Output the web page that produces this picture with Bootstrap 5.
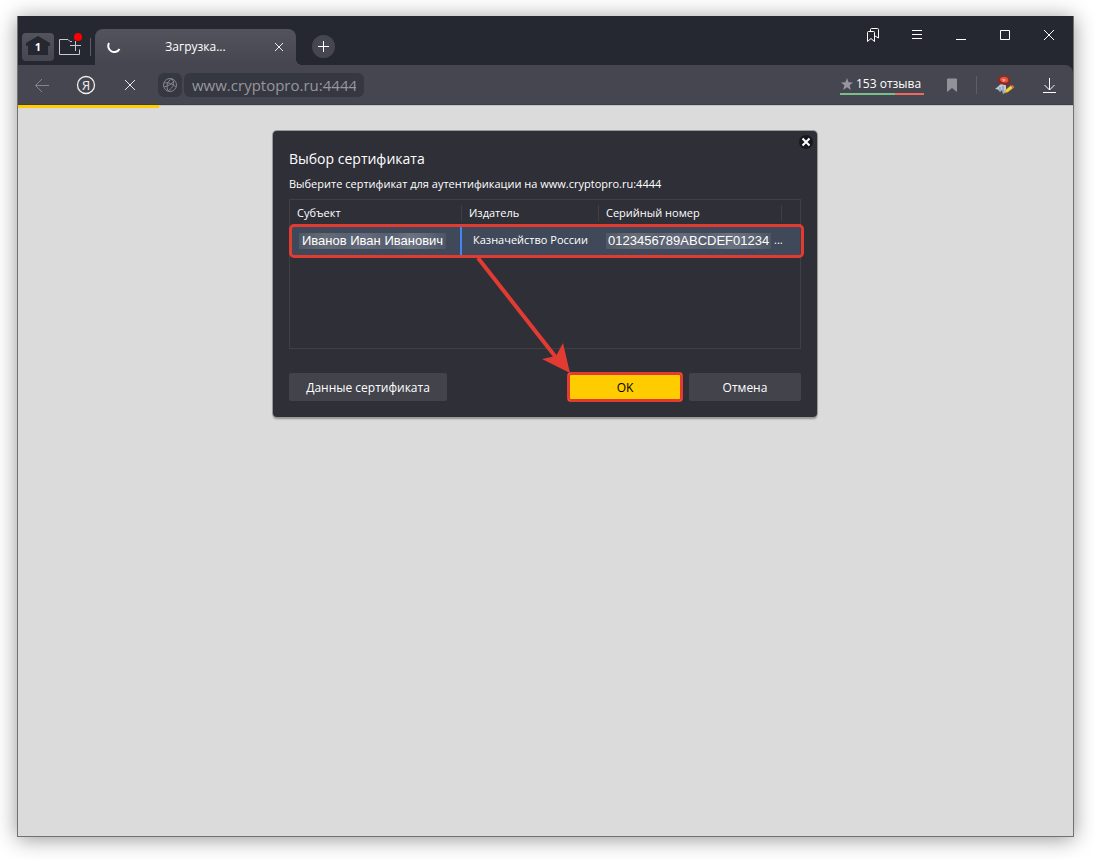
<!DOCTYPE html>
<html lang="ru">
<head>
<meta charset="utf-8">
<meta name="viewport" content="width=device-width, initial-scale=1">
<title>Выбор сертификата</title>
<link href="https://cdn.jsdelivr.net/npm/bootstrap@5.3.0/dist/css/bootstrap.min.css" rel="stylesheet">
<style>
body{background:#fff;font-family:"Open Sans","Noto Sans",sans-serif;font-size:12px;line-height:20px;color:#fff;padding:16px 21px 22px 17px}
button{border:0;background:none;padding:0;color:inherit}
svg{display:block;flex:none;overflow:visible}
.browser{min-height:calc(100vh - 38px);background:#dbdbdb;border:1px solid #717171;border-top:0;box-shadow:0 2px 20px rgba(0,0,0,.42)}
.tabstrip{height:49px;background:#252830;padding:0 2px 0 4px}
.home-btn{width:32px;height:28px;margin-top:17px;border-radius:4px;background:linear-gradient(#53535d,#464650)}
.collections{width:24px;height:24px;margin:19px 0 0 4px}
.split{width:1px;height:18px;background:#5c5e66}
.tabstrip .split{margin:22px 4px 0 8px}
.page-tab{width:201px;height:36px;margin-top:13px;padding:0 8px 0 10px;border-radius:8px 8px 0 0;background:linear-gradient(#53535d,#464650)}
.page-tab::after{content:"";position:absolute;left:100%;bottom:0;width:6px;height:6px;background:radial-gradient(circle at 100% 0,transparent 6px,#464650 6px)}
.add-tab{width:23px;height:23px;margin:19px 0 0 16px;border-radius:50%;background:#464650}
.bar-btn{width:44px;height:38px;display:flex;align-items:center;justify-content:center}
.toolbar-band{background:#252830}
.toolbar{height:40px;background:#464650;border-bottom:1px solid #3d3d46;border-radius:0 8px 0 0;padding:0 2px}
.site-btn{width:24px;height:24px;border-radius:6px;background:#363841;margin:0 2px 0 6px}
.address{width:180px;height:24px;border:0;border-radius:6px;background:#363841;color:#96979d;font-size:15px;padding:0 8px;outline:0}
.reviews{color:#fff;font-size:12px;padding:0 1px;height:20px;width:84px;border-bottom:2px solid;border-image:linear-gradient(90deg,#77c08a 65%,#ef6a5a 65%) 1}
.reviews svg{margin-right:3px}
.toolbar .split{margin:0 6px 0 4px}
.progress-line{height:3px;border-top:1px solid #c4c4c4}
.progress-line div{height:3px;margin-top:-1px;background:#fc0}
main{padding:23px 1px 0 0}
.dialog-box{width:544px;max-width:100%;margin:0 auto;padding:16px;background:#2f2f38;border-radius:4px;box-shadow:0 0 0 1px #999,0 2px 2px rgba(0,0,0,.35)}
.dialog-box h1{font-size:14px;line-height:24px;font-weight:400;margin:0}
.dialog-box p{font-size:11px;margin:3px 0 5px}
.dlg-close{position:absolute;right:4px;top:4px;width:14px;height:14px;border-radius:50%;background:#18181c}
.grid-box{height:150px;border:1px solid #3f3f46}
.certs{width:100%;table-layout:fixed;border-collapse:separate;border-spacing:0;font-size:11px;white-space:nowrap}
.certs th{font-weight:400;height:25px;padding:0 7px;background:linear-gradient(#3f3f46,#3f3f46) 100% 50%/1px 16px no-repeat}
.certs th:last-child{background:none;padding:0}
.certs td{height:31px;background:#3f4959;padding:0 0 2px 11px;font-size:11px}
.certs td:first-child{border-right:2px solid #4285f4;padding-left:9px}
.certs td:nth-child(3){padding-left:7px}
.masked{background:linear-gradient(90deg,#505865,#666b76 18%,#596170 32%,#666b7b 45%,#565e6e 60%,#6c7280 75%,#5e6675 88%,#4c5564);font:13px/16px "Liberation Sans",Arial,sans-serif;display:inline-block;padding:0 3px;vertical-align:middle}
.certs td:nth-child(3) .masked{padding:0 2px}
.row-mark{position:absolute;left:-1px;right:-4px;top:24px;height:34px;border:3px solid #e23b32;border-radius:5px;pointer-events:none}
.pointer{position:absolute;left:184px;top:56px;pointer-events:none}
.actions{margin-top:24px}
.dlg-btn{height:28px;width:112px;border-radius:2px;background:#42434b;font-size:12px;padding-top:1px}
.dlg-btn.wide{width:158px}
.dlg-btn.accept{background:#fc0;color:#000;margin-right:7px;box-shadow:0 0 0 1px #e23b32,inset 0 0 0 2px #e23b32;border-radius:3px;width:114px}
</style>
</head>
<body>
<div class="browser">
  <header>
    <div class="tabstrip d-flex align-items-start">
      <button class="home-btn" aria-label="Главная"><svg width="32" height="28" viewBox="0 0 32 28"><path d="M4 10 16 3l12 7v3h-2v9H6v-9H4z" fill="#252830"/><text x="16" y="18" text-anchor="middle" font-size="11" font-weight="700" fill="#fff">1</text></svg></button>
      <button class="collections" aria-label="Коллекции"><svg width="24" height="24" viewBox="0 0 24 24" fill="none" stroke="#c9cacd"><path d="M14 6.500h-2l-2-2H1.500v15h20v-5M17.500 6v10M12 10.500h11"/><circle cx="20" cy="2" r="4" fill="#f00" stroke="none"/></svg></button>
      <div class="split"></div>
      <div class="page-tab position-relative d-flex align-items-center">
        <svg width="16" height="16" viewBox="0 0 16 16" fill="none" stroke="#fff" stroke-width="2"><path d="M4 4A6 6 0 1 0 14.500 10"/></svg>
        <span class="flex-grow-1 text-center">Загрузка...</span>
        <button aria-label="Закрыть вкладку"><svg width="18" height="18" viewBox="0 0 18 18" stroke="#eee"><path d="m5 5 8 8m0-8-8 8"/></svg></button>
      </div>
      <button class="add-tab" aria-label="Новая вкладка"><svg width="23" height="23" viewBox="0 0 23 23" stroke="#fff"><path d="M6 11.500h11M11.500 6v11"/></svg></button>
      <div class="d-flex ms-auto">
        <button class="bar-btn" aria-label="Закладки"><svg width="14" height="16" viewBox="0 0 14 16" fill="none" stroke="#fff"><path d="M1.500 5.500a1 1 0 0 1 1-1h5a1 1 0 0 1 1 1V14.500L5 11.500l-3.500 3zM4.500 4V2.500a1 1 0 0 1 1-1h6a1 1 0 0 1 1 1V11L9 9"/></svg></button>
        <button class="bar-btn" aria-label="Меню"><svg width="12" height="12" viewBox="0 0 12 12" stroke="#fff"><path d="M1 1.500h10M1 5.500h10M1 9.500h10"/></svg></button>
        <button class="bar-btn" aria-label="Свернуть"><svg width="12" height="12" viewBox="0 0 12 12" stroke="#fff"><path d="M1 10.500h10"/></svg></button>
        <button class="bar-btn" aria-label="Развернуть"><svg width="12" height="12" viewBox="0 0 12 12" fill="none" stroke="#fff"><path d="M1.500 1.500h9v9h-9z"/></svg></button>
        <button class="bar-btn" aria-label="Закрыть"><svg width="12" height="12" viewBox="0 0 12 12" stroke="#fff"><path d="m1 1 10 10m0-10L1 11"/></svg></button>
      </div>
    </div>
    <div class="toolbar-band">
      <div class="toolbar d-flex align-items-center">
        <button class="bar-btn" aria-label="Назад"><svg width="16" height="16" viewBox="0 0 16 16" fill="none" stroke="#85868d"><path d="M15 8.500H1.500M8 2 1.500 8.500 8 15"/></svg></button>
        <button class="bar-btn" aria-label="Яндекс"><svg width="20" height="20" viewBox="0 0 20 20"><circle cx="10" cy="10" r="8.500" fill="none" stroke="#eee" stroke-width="1.300"/><text x="10" y="15" text-anchor="middle" font-size="13" fill="#eee">Я</text></svg></button>
        <button class="bar-btn" aria-label="Остановить"><svg width="12" height="12" viewBox="0 0 12 12" stroke="#e8e8ea"><path d="m1 1 10 10m0-10L1 11"/></svg></button>
        <button class="site-btn d-flex align-items-center justify-content-center" aria-label="О сайте"><svg width="16" height="16" viewBox="0 0 16 16" fill="none" stroke="#85868d"><circle cx="8" cy="8" r="6.500"/><path d="M10 2C5 4 4 9 6 14M10 2c3 4 2 8-4 12M2 6c4-1 9 1 12 4M2 10c4-1 8-3 10-6"/></svg></button>
        <input class="address" type="text" value="www.cryptopro.ru:4444" aria-label="Адрес">
        <a href="#" class="reviews ms-auto d-flex align-items-center text-decoration-none text-nowrap"><svg width="12" height="12" viewBox="0 0 12 12"><path d="m6 0 1.600 4.300L12 4.500 8.600 7.300 9.800 12 6 9.300 2.200 12l1.200-4.700L0 4.500l4.400-.2z" fill="#96979d"/></svg>153 отзыва</a>
        <button class="ms-2" aria-label="В закладки"><svg width="40" height="16" viewBox="0 0 40 16"><path d="M15 2.500a1 1 0 0 1 1-1h8a1 1 0 0 1 1 1V15l-5-4-5 4z" fill="#929399"/></svg></button>
        <div class="split"></div>
        <button class="bar-btn" aria-label="Расширение"><svg width="20" height="20" viewBox="0 0 20 20"><path d="M6 9C4 10 3 12 0 14l3 .5L5 17l2-2 1 4 3-2V9z" fill="#bccbdc"/><path d="M5 12v4m3-5v7" stroke="#637890" stroke-width=".8"/><path d="M3 4c0-2 3-3.500 6-3.500S15 2 15 5c0 3-1 5-3 5.500L5 9C3 8 2.500 6 3 4z" fill="#94271d"/><path d="M5 4c1-3 7-3 8 0 1 3-1 4-4 3.500S5 6 5 4z" fill="#d95744"/><path d="M7 4.500h3v1H8V7" fill="none" stroke="#f1a293"/><path d="m9.500 18 1.500-3.500 5-4 2 2.500-5 4z" fill="#f2d642" stroke="#ad8f28" stroke-width=".6"/><path d="m16 11 1.500-1 2 2-1.500 1.500z" fill="#e86060"/></svg></button>
        <button class="bar-btn" aria-label="Загрузки"><svg width="14" height="16" viewBox="0 0 14 16" fill="none" stroke="#fff"><path d="M7.500 1v12M2.500 8l5 5 5-5M1 15.500h13"/></svg></button>
      </div>
    </div>
    <div class="progress-line"><div style="width:13.400%"></div></div>
  </header>

  <main>
    <section class="dialog-box position-relative" role="dialog" aria-labelledby="dialog-title">
      <button class="dlg-close" aria-label="Закрыть"><svg width="14" height="14" viewBox="0 0 14 14" stroke="#fff" stroke-width="2"><path d="m3.500 3.500 7 7m0-7-7 7"/></svg></button>
      <h1 id="dialog-title">Выбор сертификата</h1>
      <p>Выберите сертификат для аутентификации на www.cryptopro.ru:4444</p>
      <div class="grid-box position-relative">
        <table class="certs">
          <colgroup><col style="width:172px"><col style="width:137px"><col style="width:183px"><col></colgroup>
          <thead><tr><th>Субъект</th><th>Издатель</th><th>Серийный номер</th><th></th></tr></thead>
          <tbody><tr><td><span class="masked">Иванов Иван Иванович</span></td><td>Казначейство России</td><td><span class="masked">0123456789ABCDEF01234</span> ...</td><td></td></tr></tbody>
        </table>
        <div class="row-mark"></div>
        <svg class="pointer" width="100" height="120" viewBox="0 0 100 120"><path d="M4 2 84 104" stroke="#e23b32" stroke-width="4"/><path d="M96 117 68 103 82 100 89 87z" fill="#e23b32"/></svg>
      </div>
      <div class="actions d-flex">
        <button class="dlg-btn wide me-auto">Данные сертификата</button>
        <button class="dlg-btn accept">OK</button>
        <button class="dlg-btn">Отмена</button>
      </div>
    </section>
  </main>
</div>
<script src="https://cdn.jsdelivr.net/npm/bootstrap@5.3.0/dist/js/bootstrap.bundle.min.js"></script>
</body>
</html>
